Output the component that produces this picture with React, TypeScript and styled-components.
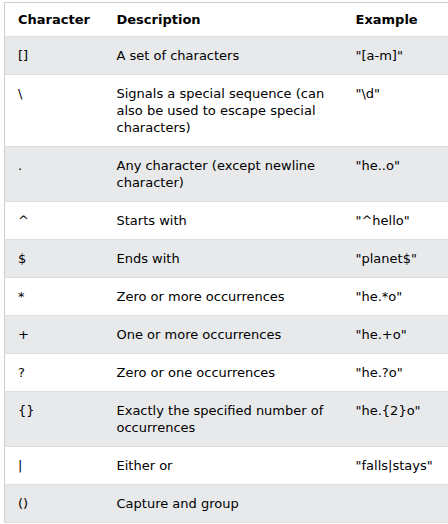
import React from "react";
import styled, { createGlobalStyle } from "styled-components";

const Global = createGlobalStyle`
  html, body { margin: 0; padding: 0; background: #fff; }
  body { font-family: "DejaVu Sans", Verdana, sans-serif; color: #000; }
`;

const Page = styled.div`
  padding: 2px 0 0 4px;
  width: 448px;
  overflow: hidden;
  box-sizing: border-box;
`;

const Table = styled.table`
  border-collapse: collapse;
  border: 1px solid #ccc;
  border-right: none;
  width: 470px;
  table-layout: fixed;
  font-size: 13px;
  line-height: 17px;
`;

const Row = styled.tr<{ $shade: boolean }>`
  background: ${(p) => (p.$shade ? "#e7e9eb" : "#fff")};
  border-bottom: 1px solid #ddd;
`;

const Head = styled.th<{ $w: number; $first?: boolean }>`
  box-sizing: border-box;
  width: ${(p) => p.$w}px;
  text-align: left;
  font-weight: bold;
  vertical-align: top;
  padding: 8px 8px 8px ${(p) => (p.$first ? 13 : 8)}px;
`;

const Cell = styled.td<{ $first?: boolean }>`
  box-sizing: border-box;
  vertical-align: top;
  padding: 10px 8px 10px ${(p) => (p.$first ? 13 : 8)}px;
`;

const rows: [string, string, string][] = [
  ["[]", "A set of characters", '"[a-m]"'],
  ["\\", "Signals a special sequence (can also be used to escape special characters)", '"\\d"'],
  [".", "Any character (except newline character)", '"he..o"'],
  ["^", "Starts with", '"^hello"'],
  ["$", "Ends with", '"planet$"'],
  ["*", "Zero or more occurrences", '"he.*o"'],
  ["+", "One or more occurrences", '"he.+o"'],
  ["?", "Zero or one occurrences", '"he.?o"'],
  ["{}", "Exactly the specified number of occurrences", '"he.{2}o"'],
  ["|", "Either or", '"falls|stays"'],
  ["()", "Capture and group", ""],
];

export default function App() {
  return (
    <>
      <Global />
      <Page>
        <Table>
          <thead>
            <Row $shade={false}>
              <Head $w={104} $first>Character</Head>
              <Head $w={239}>Description</Head>
              <Head $w={127}>Example</Head>
            </Row>
          </thead>
          <tbody>
            {rows.map((r, i) => (
              <Row key={i} $shade={i % 2 === 0}>
                <Cell $first>{r[0]}</Cell>
                <Cell>{r[1]}</Cell>
                <Cell>{r[2]}</Cell>
              </Row>
            ))}
          </tbody>
        </Table>
      </Page>
    </>
  );
}
